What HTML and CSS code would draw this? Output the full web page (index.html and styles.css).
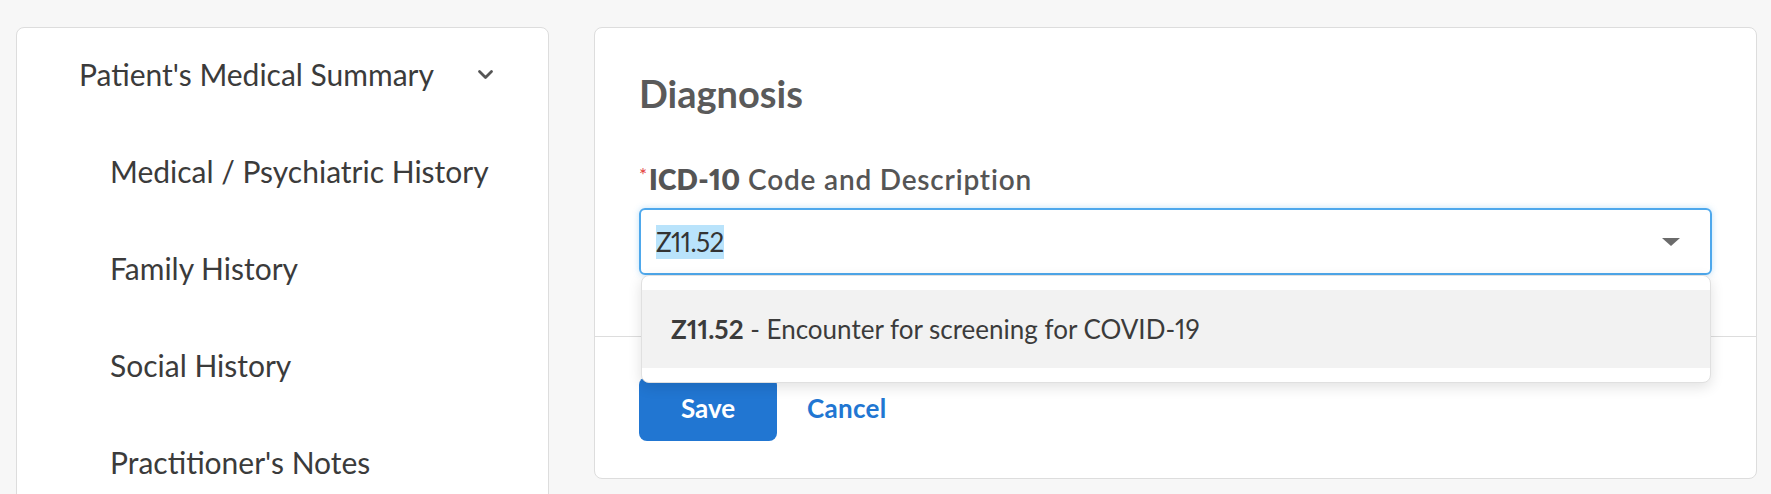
FILE: index.html
```html
<!DOCTYPE html>
<html lang="en">
<head>
    <meta charset="UTF-8">
    <meta name="viewport" content="width=device-width, initial-scale=1.0">
    <title>Diagnosis</title>
    <link rel="stylesheet" href="styles.css">
</head>
<body>

<div class="page">
    <aside class="side-card">
        <ul class="side-nav">
            <li class="nav-group">
                <span>Patient's Medical Summary</span>
                <svg class="chevron" width="17" height="11" viewBox="0 0 17 11">
                    <polyline points="2.5,2.5 8.5,8.5 14.5,2.5" fill="none" stroke="#555" stroke-width="2.8" stroke-linecap="round" stroke-linejoin="round"/>
                </svg>
            </li>
            <li class="nav-item">Medical / Psychiatric History</li>
            <li class="nav-item">Family History</li>
            <li class="nav-item">Social History</li>
            <li class="nav-item">Practitioner's Notes</li>
        </ul>
    </aside>

    <main class="form-card">
        <div class="form-body">
            <h2 class="form-title">Diagnosis</h2>
            <label class="field-label"><span class="req">*</span><b>ICD-10</b> Code and Description</label>
            <div class="combo">
                <div class="combo-input">
                    <span class="combo-value">Z11.52</span>
                    <span class="combo-arrow"></span>
                </div>
                <ul class="combo-menu">
                    <li class="combo-option active"><b>Z11.52</b>&nbsp;- Encounter for screening for COVID-19</li>
                </ul>
            </div>
        </div>
        <div class="form-footer">
            <button class="btn-save">Save</button>
            <button class="btn-cancel">Cancel</button>
        </div>
    </main>
</div>

</body>
</html>
```

FILE: styles.css
```css
html, body {
    margin: 0;
    padding: 0;
    height: 100%;
    overflow: hidden; /* left card runs past the window */
}
body {
    background-color: #f7f7f7;
    font-family: "Lato", "Open Sans", sans-serif;
    font-variant-numeric: proportional-nums;
    color: #3b3b3b;
}
.page {
    display: flex;
    align-items: flex-start;
    gap: 45px;
    padding: 27px 14px 0 16px;
}

/* side navigation */
.side-card {
    width: 533px;
    flex-shrink: 0;
    box-sizing: border-box;
    background-color: #fff;
    border: 1px solid #ddd;
    border-radius: 8px;
    padding-bottom: 40px;
}
.side-nav {
    list-style: none;
    margin: 0;
    padding: 0;
}
.side-nav li {
    height: 97px;
    box-sizing: border-box;
    padding-bottom: 5px;
    display: flex;
    align-items: center;
    font-size: 30px;
}
.nav-group {
    justify-content: space-between;
    padding-left: 62px;
    padding-right: 54px;
}
.nav-item {
    padding-left: 93px;
}
.chevron {
    display: block;
}

/* form card */
.form-card {
    flex: 1;
    background-color: #fff;
    border: 1px solid #ddd;
    border-radius: 8px;
}
.form-body {
    padding: 43px 44px 61px;
    border-bottom: 1px solid #ddd;
}
.form-title {
    margin: 0;
    font-size: 38px;
    line-height: 1.2;
    font-weight: 700;
    color: #5a5a5a;
}
.field-label {
    display: block;
    margin-top: 46px;
    font-size: 28px;
    line-height: 1.2;
    font-weight: 600;
    letter-spacing: 0.8px;
    color: #555;
}
.field-label b {
    font-weight: 800;
    letter-spacing: 0.3px;
}
.req {
    color: #e3403b;
    font-size: 19px;
    font-weight: 400;
    vertical-align: 8px;
    margin-right: 1px;
}

.combo {
    position: relative;
    margin-top: 12px;
}
.combo-input {
    height: 67px;
    box-sizing: border-box;
    display: flex;
    align-items: center;
    justify-content: space-between;
    padding: 0 30px 0 15px;
    border: 2px solid #4ea8ec;
    border-radius: 6px;
    box-shadow: 0 0 6px rgba(78, 168, 236, 0.35);
    font-size: 26px;
    color: #333;
}
.combo-value {
    background-color: #b9e3fb;
    line-height: 34px;
    letter-spacing: -0.6px;
}
.combo-arrow {
    width: 0;
    height: 0;
    border-left: 9px solid transparent;
    border-right: 9px solid transparent;
    border-top: 8px solid #6b6b6b;
}
.combo-menu {
    position: absolute;
    z-index: 2;
    top: 100%;
    left: 2px;
    right: 1px;
    margin: 0;
    padding: 14px 0;
    list-style: none;
    background-color: #fff;
    border: 1px solid #e0e0e0;
    border-radius: 8px;
    box-shadow: 0 4px 14px rgba(0, 0, 0, 0.12);
}
.combo-option {
    height: 78px;
    display: flex;
    align-items: center;
    padding: 0 29px;
    font-size: 26px;
    color: #3b3b3b;
}
.combo-option.active {
    background-color: #f2f2f2;
}

.form-footer {
    display: flex;
    align-items: center;
    gap: 30px;
    padding: 40px 44px 37px;
}
.btn-save {
    width: 138px;
    height: 64px;
    padding: 0 0 3px;
    border: none;
    border-radius: 8px;
    background-color: #2176d2;
    color: #fff;
    font-family: inherit;
    font-size: 26px;
    font-weight: 700;
}
.btn-cancel {
    border: none;
    background: none;
    padding: 0 0 3px;
    color: #2176d2;
    font-family: inherit;
    font-size: 26px;
    font-weight: 700;
    letter-spacing: 0.3px;
}
```
